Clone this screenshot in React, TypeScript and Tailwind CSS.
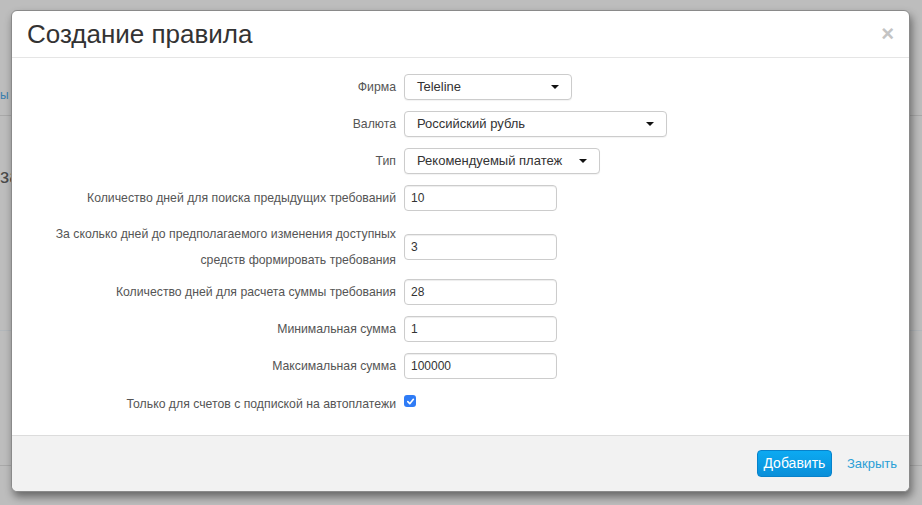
import { ReactNode } from "react";

const font = { fontFamily: '"Liberation Sans", Arial, sans-serif' };

const Row = ({ label, children, className = "" }: { label: ReactNode; children: ReactNode; className?: string }) => (
  <div className={`flex items-center ${className}`}>
    <div className="w-[384px] shrink-0 text-right text-[12.25px] text-[#555] leading-[26px]">{label}</div>
    <div className="ml-[8px]">{children}</div>
  </div>
);

const Select = ({ value, width }: { value: string; width: string }) => (
  <div
    className={`${width} h-[26px] flex items-center justify-between pl-[12px] pr-[12px] border border-[#ccc] rounded-[4px] bg-white text-[13px] text-[#333] shadow-[0_1px_1px_rgba(0,0,0,0.05)]`}
  >
    <span>{value}</span>
    <span className="w-0 h-0 border-l-[4px] border-r-[4px] border-t-[4px] border-l-transparent border-r-transparent border-t-[#111]" />
  </div>
);

const Input = ({ value }: { value: string }) => (
  <div className="w-[153px] h-[26px] flex items-center pl-[6px] border border-[#ccc] rounded-[4px] bg-white text-[12px] text-[#333] shadow-[inset_0_1px_1px_rgba(0,0,0,0.075)]">
    {value}
  </div>
);

export default function App() {
  return (
    <div className="relative w-[922px] h-[505px] overflow-hidden bg-[#bdbdbd]" style={font}>
      {/* page behind the overlay */}
      <div className="flex flex-col">
        <div className="h-[87px]" />
        <div className="h-[17px] text-[12px] text-[#3a7fae] leading-[17px]">ы</div>
        <div className="h-[11px]" />
        <div className="h-px bg-[#a9a9a9]" />
        <div className="h-[48px]" />
        <div className="text-[20px] text-[#4a4a4a] leading-[24px]">за</div>
        <div className="h-[142px]" />
        <div className="h-px bg-[#b2b7bb]" />
        <div className="h-[134px]" />
        <div className="h-px bg-[#a9a9a9]" />
      </div>

      {/* modal */}
      <div className="absolute left-[11px] top-[10px] w-[899px] h-[482px] flex flex-col bg-white rounded-[6px] border border-[#8a8a8a] shadow-[2px_5px_8px_rgba(0,0,0,0.45)]">
        <div className="h-[47px] shrink-0 flex items-center justify-between pl-[15px] pr-[15px] border-b border-[#e5e5e5]">
          <h4 className="text-[26px] text-[#333] leading-none">Создание правила</h4>
          <span className="text-[22px] font-bold text-[#c4c4c4] leading-none">×</span>
        </div>

        <div className="flex-1 flex flex-col pt-[16px]">
          <Row label="Фирма">
            <Select value="Teleline" width="w-[168px]" />
          </Row>
          <Row label="Валюта" className="mt-[11px]">
            <Select value="Российский рубль" width="w-[263px]" />
          </Row>
          <Row label="Тип" className="mt-[11px]">
            <Select value="Рекомендуемый платеж" width="w-[196px]" />
          </Row>
          <Row label="Количество дней для поиска предыдущих требований" className="mt-[11px]">
            <Input value="10" />
          </Row>
          <Row
            label={
              <>
                За сколько дней до предполагаемого изменения доступных
                <br />
                средств формировать требования
              </>
            }
            className="mt-[10px]"
          >
            <Input value="3" />
          </Row>
          <Row label="Количество дней для расчета суммы требования" className="mt-[6px]">
            <Input value="28" />
          </Row>
          <Row label="Минимальная сумма" className="mt-[11px]">
            <Input value="1" />
          </Row>
          <Row label="Максимальная сумма" className="mt-[11px]">
            <Input value="100000" />
          </Row>
          <Row label="Только для счетов с подпиской на автоплатежи" className="mt-[12px]">
            <div className="w-[12px] h-[12px] mb-[6px] rounded-[3px] bg-[#2f7cf6] flex items-center justify-center">
              <svg width="9" height="9" viewBox="0 0 10 10">
                <path d="M2 5.2 L4.2 7.4 L8.2 2.6" fill="none" stroke="white" strokeWidth="1.8" strokeLinecap="round" strokeLinejoin="round" />
              </svg>
            </div>
          </Row>
        </div>

        <div className="h-[56px] shrink-0 flex items-center justify-end gap-[15px] pr-[12px] border-t border-[#dcdcdc] bg-[#f2f2f2] rounded-b-[6px]">
          <button className="w-[75px] h-[27px] rounded-[4px] border border-[#0782cb] bg-gradient-to-b from-[#0caaf2] to-[#0a8fd9] text-white text-[14px]">
            Добавить
          </button>
          <span className="text-[13px] text-[#2a9fd6]">Закрыть</span>
        </div>
      </div>
    </div>
  );
}
